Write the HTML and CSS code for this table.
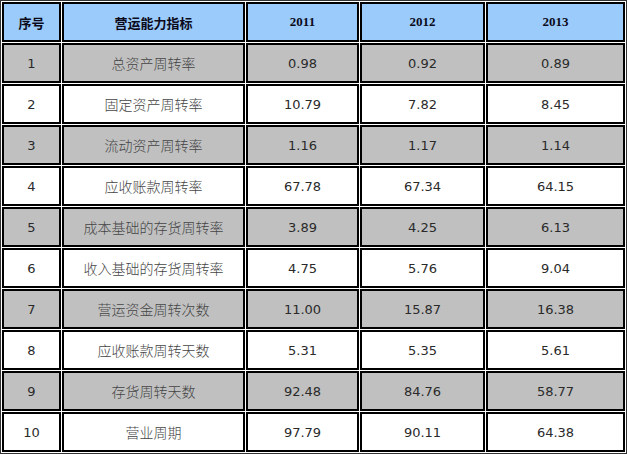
FILE: index.html
```html
<!DOCTYPE html>
<html>
<head>
<meta charset="utf-8">
<link rel="stylesheet" href="styles.css">
</head>
<body>
<table class="grid">
  <colgroup>
    <col class="c1"><col class="c2"><col class="c3"><col class="c4"><col class="c5">
  </colgroup>
  <thead>
    <tr class="head">
      <th>序号</th><th>营运能力指标</th><th class="yr">2011</th><th class="yr">2012</th><th class="yr">2013</th>
    </tr>
  </thead>
  <tbody>
    <tr class="gray"><td class="n">1</td><td class="cn">总资产周转率</td><td class="n">0.98</td><td class="n">0.92</td><td class="n">0.89</td></tr>
    <tr class="white"><td class="n">2</td><td class="cn">固定资产周转率</td><td class="n">10.79</td><td class="n">7.82</td><td class="n">8.45</td></tr>
    <tr class="gray"><td class="n">3</td><td class="cn">流动资产周转率</td><td class="n">1.16</td><td class="n">1.17</td><td class="n">1.14</td></tr>
    <tr class="white"><td class="n">4</td><td class="cn">应收账款周转率</td><td class="n">67.78</td><td class="n">67.34</td><td class="n">64.15</td></tr>
    <tr class="gray"><td class="n">5</td><td class="cn">成本基础的存货周转率</td><td class="n">3.89</td><td class="n">4.25</td><td class="n">6.13</td></tr>
    <tr class="white"><td class="n">6</td><td class="cn">收入基础的存货周转率</td><td class="n">4.75</td><td class="n">5.76</td><td class="n">9.04</td></tr>
    <tr class="gray"><td class="n">7</td><td class="cn">营运资金周转次数</td><td class="n">11.00</td><td class="n">15.87</td><td class="n">16.38</td></tr>
    <tr class="white"><td class="n">8</td><td class="cn">应收账款周转天数</td><td class="n">5.31</td><td class="n">5.35</td><td class="n">5.61</td></tr>
    <tr class="gray"><td class="n">9</td><td class="cn">存货周转天数</td><td class="n">92.48</td><td class="n">84.76</td><td class="n">58.77</td></tr>
    <tr class="white"><td class="n">10</td><td class="cn">营业周期</td><td class="n">97.79</td><td class="n">90.11</td><td class="n">64.38</td></tr>
  </tbody>
</table>
</body>
</html>
```
FILE: styles.css
```css
html, body {
  margin: 0;
  padding: 0;
  background: #ffffff;
}
.grid {
  width: 627px;
  table-layout: fixed;
  border-collapse: separate;
  border-spacing: 1px;
  border: 1px solid #333333;
}
.c1 { width: 59px; }
.c2 { width: 183px; }
.c3 { width: 113px; }
.c4 { width: 125px; }
.c5 { width: 139px; }
.grid th,
.grid td {
  box-sizing: border-box;
  height: 40px;
  padding: 0;
  border: 2px solid #000000;
  text-align: center;
  vertical-align: middle;
  white-space: nowrap;
}
.head th {
  background: #9bcbfa;
  color: #0a0a1a;
  font-family: "Noto Sans CJK SC", sans-serif;
  font-size: 13px;
  font-weight: 700;
}
.head th.yr {
  font-family: "Liberation Serif", "Noto Sans CJK SC", serif;
  font-size: 13px;
}
.gray td { background: #c0c0c0; }
.white td { background: #ffffff; }
.n {
  font-family: "DejaVu Sans", sans-serif;
  font-size: 13px;
  color: #2a2a2a;
}
.cn {
  font-family: "Noto Sans CJK SC", sans-serif;
  font-size: 14px;
  font-weight: 300;
  color: #444444;
}
```
